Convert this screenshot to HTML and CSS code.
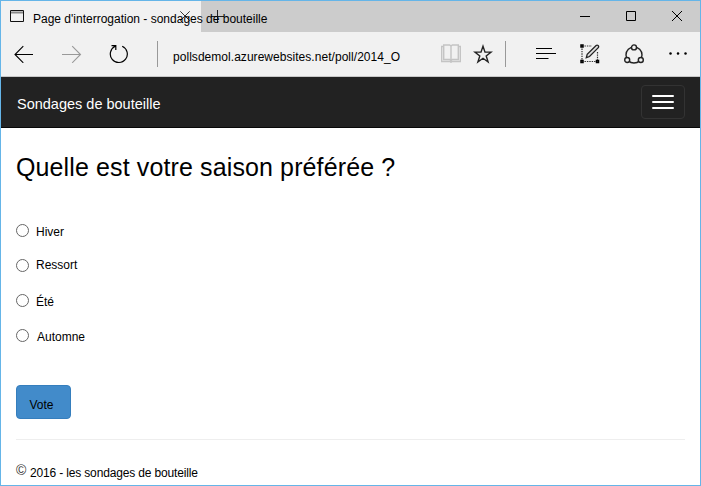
FILE: index.html
```html
<!DOCTYPE html>
<html lang="fr">
<head>
<meta charset="utf-8">
<title>Page d'interrogation - sondages de bouteille</title>
<link rel="stylesheet" href="styles.css">
</head>
<body>
<div class="window">
  <header class="titlebar">
    <div class="tab">
      <svg class="tab-icon" width="14" height="12" viewBox="0 0 14 12"><path d="M.5.5h13v11H.5z" fill="none" stroke="#111"/><path d="M1 2.5h12" stroke="#888" stroke-width="2"/></svg>
      <span class="tab-title">Page d'interrogation - sondages de bouteille</span>
      <svg class="tab-close" width="10" height="10" viewBox="0 0 10 10"><path d="M.3.3l9.4 9.4M9.7.3L.3 9.7" stroke="#333"/></svg>
    </div>
    <svg class="new-tab" width="13" height="13" viewBox="0 0 13 13"><path d="M0 6.5h13M6.5 0v13" stroke="#222"/></svg>
    <div class="controls">
      <svg width="10" height="10" viewBox="0 0 10 10"><path d="M0 5.5h10" stroke="#000"/></svg>
      <svg width="10" height="10" viewBox="0 0 10 10"><path d="M.5.5h9v9h-9z" fill="none" stroke="#000"/></svg>
      <svg width="10" height="10" viewBox="0 0 10 10"><path d="M0 0l10 10M10 0L0 10" stroke="#000"/></svg>
    </div>
  </header>
  <div class="toolbar">
    <svg class="back" width="20" height="18" viewBox="0 0 20 18"><path d="M19 9.500H1M9.300 1.200L1 9.500l8.300 8.300" fill="none" stroke="#000" stroke-width="1.100"/></svg>
    <svg class="forward" width="20" height="18" viewBox="0 0 20 18"><path d="M0 9.500h18.500M10.200 1.200l8.300 8.300-8.300 8.300" fill="none" stroke="#999" stroke-width="1.100"/></svg>
    <svg class="refresh" width="20" height="20" viewBox="0 0 20 20"><path d="M13.200 2.200A8.500 8.500 0 1 1 6.200 2.300M2.500 1.700h4.300v4.300" fill="none" stroke="#000" stroke-width="1.200"/></svg>
    <i class="rule"></i>
    <span class="url">pollsdemol.azurewebsites.net/poll/2014_O</span>
    <svg class="book" width="20" height="19" viewBox="0 0 20 19"><path d="M.7 2.500h2V1h6l1.300 1 1.300-1h6v1.500h2v15h-8.300l-1 .8-1-.8H.7zM2.700 2.500v13h6l1.300 1 1.300-1h6v-13M10 2v15" fill="none" stroke="#c4c4c4" stroke-width="1.400"/></svg>
    <svg class="star" width="20" height="20" viewBox="0 0 20 20"><path d="M10 2.200l2 5.900h6.200l-5 3.800 1.900 6.100-5.100-3.700L4.900 18l1.900-6.100-5-3.800H8z" fill="none" stroke="#222" stroke-width="1.400"/></svg>
    <i class="rule"></i>
    <svg class="hub" width="20" height="12" viewBox="0 0 20 12"><path d="M0 .5h16M0 5.500h20M0 10.500h12.500" stroke="#000" stroke-width="1.200"/></svg>
    <svg class="note" width="20" height="20" viewBox="0 0 20 20"><path d="M4.500 2h7.500M2 4.500v11M4.500 17.500h11M17.500 8v8" fill="none" stroke="#333" stroke-width="1.200" stroke-dasharray="1.400 1"/><path d="M1 1h2v2H1zM1 16.500h2v2H1zM16.500 16.500h2v2h-2z" fill="#888" stroke="#000" stroke-width="1.500"/><path d="M6.300 13.700l.9-3.300 8.900-8.900q1-.8 2 0t.2 2.200l-8.800 8.800z" fill="#ddd" stroke="#222" stroke-width="1.300"/></svg>
    <svg class="share" width="20" height="20" viewBox="0 0 20 20"><g fill="none" stroke="#222" stroke-width="1.400"><circle cx="10" cy="11" r="8"/><g fill="#f1f1f1"><circle cx="10" cy="3.400" r="2.500"/><circle cx="3.200" cy="16" r="2.500"/><circle cx="16.800" cy="16" r="2.500"/></g></g></svg>
    <svg class="more" width="18" height="3" viewBox="0 0 18 3"><g fill="#000"><circle cx="1.500" cy="1.500" r="1.250"/><circle cx="9" cy="1.500" r="1.250"/><circle cx="16.500" cy="1.500" r="1.250"/></g></svg>
  </div>
  <nav class="navbar">
    <span class="brand">Sondages de bouteille</span>
    <button class="toggle" aria-label="Menu"><i></i><i></i><i></i></button>
  </nav>
  <main>
    <h1>Quelle est votre saison préférée ?</h1>
    <form>
      <label class="option"><input type="radio" name="season"><span class="winter">Hiver</span></label>
      <label class="option"><input type="radio" name="season"><span class="spring">Ressort</span></label>
      <label class="option"><input type="radio" name="season"><span class="summer">Été</span></label>
      <label class="option"><input type="radio" name="season"><span class="autumn">Automne</span></label>
      <button class="vote" type="button">Vote</button>
    </form>
    <footer><span class="copy">©</span><span class="legal">2016 - les sondages de bouteille</span></footer>
  </main>
</div>
</body>
</html>
```
FILE: styles.css
```css
* { box-sizing: border-box; }
html, body { margin: 0; height: 100%; overflow: hidden; }
body { font: 12px/16px "Liberation Sans", Arial, sans-serif; color: #000; background: #fff; }
svg { display: block; flex: none; }
span { white-space: nowrap; }
.window { height: 486px; border: 1px solid #65b5e8; }

.titlebar { display: flex; height: 31px; background: #ccc; }
.tab { display: flex; width: 200px; background: #f1f1f1; }
.tab-icon { margin: 9px 9px 0; }
.tab-title { width: 147px; margin-top: 10px; z-index: 1; }
.tab-close { margin-top: 10px; }
.new-tab { margin: 9px 0 0 10px; }
.controls { display: flex; gap: 36px; margin: 10px 18px 0 auto; }

.toolbar { display: flex; align-items: center; height: 45px; padding: 0 12px 1px 13px; background: #f1f1f1; border-bottom: 1px solid #c8c8c8; }
.forward { margin-left: 28px; }
.refresh { margin-left: 27px; }
.rule { flex: none; width: 1px; height: 26px; background: #999; }
.refresh + .rule { margin-left: 28px; }
.url { width: 268px; margin: 6px 0 0 15px; letter-spacing: .04px; }
.star { margin-left: 12px; }
.star + .rule { margin-left: 12px; }
.hub { margin-left: 30px; }
.note { margin-left: 24px; }
.share { margin-left: 24px; }
.more { margin-left: 25px; }

.navbar { display: flex; justify-content: space-between; height: 51px; padding: 8px 15px 0 16px; background: #222; border-bottom: 1px solid #080808; }
.brand { font-size: 14.5px; line-height: 20px; color: #fff; margin-top: 9px; }
.toggle { display: flex; flex-direction: column; align-items: center; gap: 4px; width: 44px; height: 34px; padding: 9px 0 0; background: none; border: 1px solid #333; border-radius: 4px; }
.toggle i { width: 22px; height: 2px; border-radius: 1px; background: #fff; }

main { padding: 23px 15px 0; }
h1 { margin: 0; font-size: 25px; font-weight: 400; line-height: 32px; letter-spacing: .12px; white-space: nowrap; }
form { padding-top: 40px; }
.option { display: flex; height: 35px; }
.option input { appearance: none; width: 13px; height: 13px; margin: 1px 7px 0 0; border: 1px solid #666; border-radius: 50%; background: #fff; }
.option span { margin-top: 1px; }
.option .spring { margin-top: -1px; }
.autumn { margin-left: 1px; }
.vote { display: block; width: 55px; height: 34px; margin-top: 22px; padding: 6px 4px 0 0; font: inherit; color: #000; background: #428bca; border: 1px solid #357ebd; border-radius: 4px; }
footer { display: flex; margin-top: 20px; padding-top: 24px; border-top: 1px solid #eee; }
.copy { width: 14px; margin-top: -2px; font-size: 14px; color: #333; }
.legal { margin-top: 1px; letter-spacing: -.16px; }
```
